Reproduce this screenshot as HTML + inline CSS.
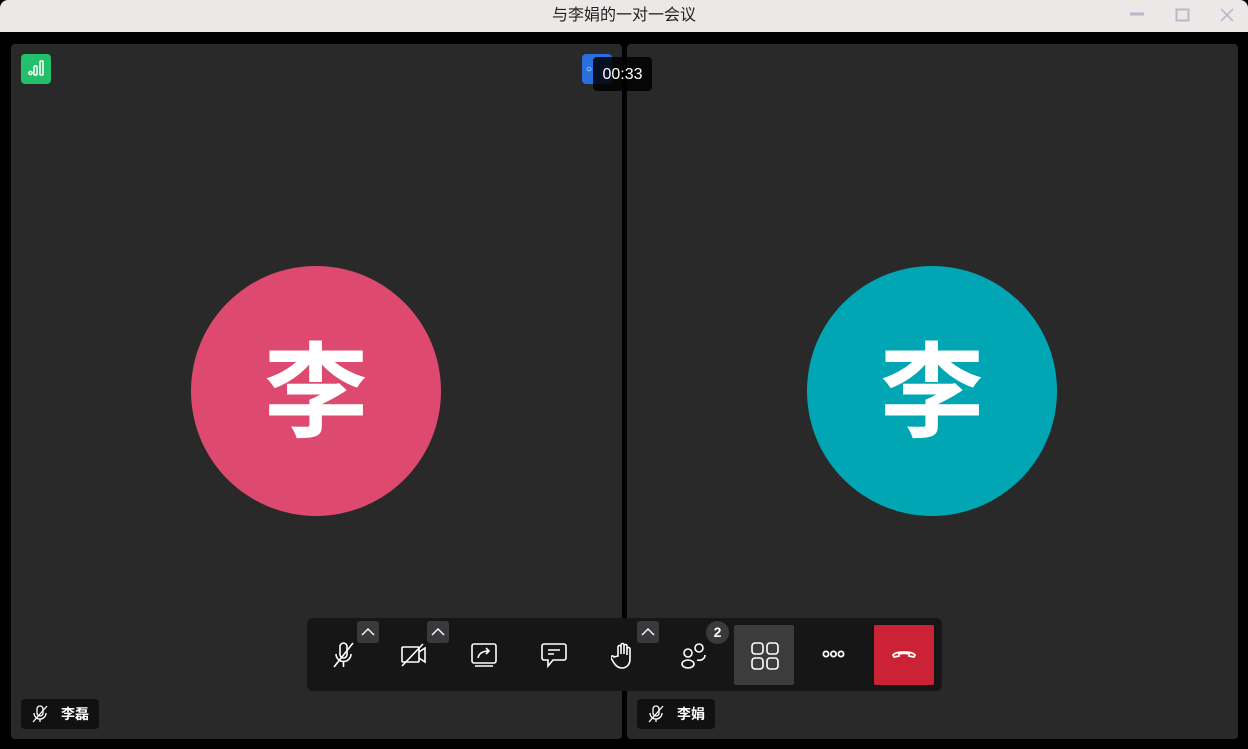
<!DOCTYPE html>
<html><head><meta charset="utf-8"><style>
*{margin:0;padding:0;box-sizing:border-box}
body{width:1248px;height:749px;overflow:hidden;background:#000;font-family:"Liberation Sans","Noto Sans CJK SC",sans-serif;position:relative}
.title{position:absolute;left:0;top:0;width:1248px;height:32px;background:#ede8e8;border-radius:8px 8px 0 0;text-align:center;font-size:16px;line-height:31px;color:#222}
.panel{position:absolute;top:44px;height:695px;background:#292929;border-radius:4px}
.av{position:absolute;width:250px;height:250px;border-radius:50%;top:222px;color:#fff;font-size:104px;font-weight:bold;text-align:center;line-height:256px}
.name{position:absolute;bottom:10px;left:10px;height:30px;background:#111;border-radius:4px;color:#fff;font-size:14px;font-weight:bold;line-height:30px;padding:0 10px 0 40px}
.name svg{position:absolute;left:10px;top:6px}
.bar{position:absolute;left:307px;top:618px;width:635px;height:73px;background:#161616;border-radius:6px}
.btn{position:absolute;top:7px;width:60px;height:60px}
.btn svg{position:absolute;left:17px;top:17px}
.car{position:absolute;top:3px;width:22px;height:22px;background:#3a3a3c;border-radius:3px}
.car svg{position:absolute;left:4px;top:5px}
</style></head><body>
<div class="title">与李娟的一对一会议</div>
<svg style="position:absolute;left:1128px;top:8px" width="110" height="16"><line x1="2" y1="6" x2="16" y2="6" stroke="#bcb8cc" stroke-width="3"/><rect x="48.5" y="1.5" width="12" height="11" fill="none" stroke="#bcb8cc" stroke-width="2"/><path d="M93 1L105 13M105 1L93 13" stroke="#bcb8cc" stroke-width="1.6"/></svg>
<div class="panel" style="left:11px;width:611px">
 <div style="position:absolute;left:10px;top:10px;width:30px;height:30px;background:#22c06a;border-radius:4px"><svg width="30" height="30"><g fill="none" stroke="#fff" stroke-width="1.5"><circle cx="9.5" cy="19" r="1.6"/><rect x="13" y="12" width="3" height="9" rx="1"/><rect x="19" y="7" width="3" height="14" rx="1"/></g></svg></div>
 <div style="position:absolute;left:571px;top:10px;width:30px;height:30px;background:#2a6fe0;border-radius:4px"></div>
 <div class="av" style="left:180px;background:#de4a6f">李</div>
 <div class="name"><svg width="18" height="18" fill="none" stroke="#fff" stroke-width="1.3"><rect x="6" y="1" width="6" height="10" rx="3"/><path d="M3 8a6 6 0 0 0 12 0M9 14v3M2 17L16 1"/></svg>李磊</div>
</div>
<div class="panel" style="left:627px;width:611px">
 <div class="av" style="left:180px;background:#00a6b4">李</div>
 <div class="name"><svg width="18" height="18" fill="none" stroke="#fff" stroke-width="1.3"><rect x="6" y="1" width="6" height="10" rx="3"/><path d="M3 8a6 6 0 0 0 12 0M9 14v3M2 17L16 1"/></svg>李娟</div>
</div>
<div style="position:absolute;left:586px;top:65px;width:30px;height:10px;color:#fff;font-size:10px;line-height:10px">○</div>
<div style="position:absolute;left:593px;top:57px;width:59px;height:34px;background:rgba(0,0,0,.85);border-radius:4px;color:#fff;font-size:16px;line-height:36px;text-align:center">00:33</div>
<div class="bar">
 <div class="btn" style="left:7px"><svg width="26" height="26" fill="none" stroke="#fff" stroke-width="1.6"><rect x="9" y="1" width="7" height="15" rx="3.5"/><path d="M5 12a7.5 7.5 0 0 0 15 0M12.5 20v5M3 25L22 1"/></svg></div>
 <div class="car" style="left:50px"><svg width="14" height="12"><path d="M1 9L7 3L13 9" fill="none" stroke="#fff" stroke-width="1.4"/></svg></div>
 <div class="btn" style="left:77px"><svg width="26" height="26" fill="none" stroke="#fff" stroke-width="1.6"><rect x="1" y="5" width="17" height="15" rx="1"/><path d="M18 10l6-4v14l-6-4M1 24L22 2"/></svg></div>
 <div class="car" style="left:120px"><svg width="14" height="12"><path d="M1 9L7 3L13 9" fill="none" stroke="#fff" stroke-width="1.4"/></svg></div>
 <div class="btn" style="left:147px"><svg width="26" height="26" fill="none" stroke="#fff" stroke-width="1.6"><rect x="1" y="2" width="24" height="19" rx="2"/><path d="M4 24h18M7 16c1-5 5-7 11-7M15 6l3 3-3 3"/></svg></div>
 <div class="btn" style="left:217px"><svg width="26" height="26" fill="none" stroke="#fff" stroke-width="1.6"><path d="M3 2h20a2 2 0 0 1 2 2v12a2 2 0 0 1-2 2H12l-5 6v-6H3a2 2 0 0 1-2-2V4a2 2 0 0 1 2-2zM7 8h12M7 12h6"/></svg></div>
 <div class="btn" style="left:287px"><svg width="26" height="28" fill="none" stroke="#fff" stroke-width="1.6"><path d="M7 14V5a1.5 1.5 0 0 1 3 0v7V3a1.5 1.5 0 0 1 3 0v9V4a1.5 1.5 0 0 1 3 0v9V7a1.5 1.5 0 0 1 3 0v10c0 5-3 9-8 9-3 0-6-2-8-5l-3-5a1.5 1.5 0 0 1 3-1z"/></svg></div>
 <div class="car" style="left:330px"><svg width="14" height="12"><path d="M1 9L7 3L13 9" fill="none" stroke="#fff" stroke-width="1.4"/></svg></div>
 <div class="btn" style="left:357px"><svg width="28" height="28" fill="none" stroke="#fff" stroke-width="1.6"><circle cx="7" cy="11" r="4"/><ellipse cx="7" cy="22" rx="6" ry="4"/><circle cx="18" cy="6" r="4"/><path d="M16 18c4 1 8-1 8-5"/></svg></div>
 <div style="position:absolute;left:399px;top:3px;width:23px;height:23px;border-radius:50%;background:#3a3a3c;color:#fff;font-size:14px;font-weight:bold;text-align:center;line-height:23px">2</div>
 <div class="btn" style="left:427px;background:#3c3c3c;border-radius:2px"><svg width="28" height="28" fill="none" stroke="#fff" stroke-width="1.6"><rect x="1" y="1" width="11" height="11" rx="3"/><rect x="16" y="1" width="11" height="11" rx="3"/><rect x="1" y="16" width="11" height="11" rx="3"/><rect x="16" y="16" width="11" height="11" rx="3"/></svg></div>
 <div class="btn" style="left:497px"><svg width="30" height="24" fill="none" stroke="#fff" stroke-width="1.8"><circle cx="5" cy="12" r="2.6"/><circle cx="12.5" cy="12" r="2.6"/><circle cx="20" cy="12" r="2.6"/></svg></div>
 <div class="btn" style="left:567px;background:#cc2235;border-radius:2px"><svg width="26" height="24" fill="none" stroke="#fff" stroke-width="1.8"><path d="M3 15l-1-2c3-4 19-4 22 0l-1 2-5-1v-2c-3-1-7-1-10 0v2z"/></svg></div>
</div>
</body></html>
